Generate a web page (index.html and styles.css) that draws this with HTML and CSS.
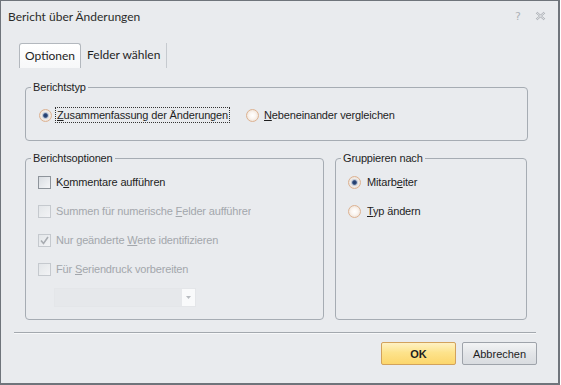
FILE: index.html
```html
<!DOCTYPE html>
<html lang="de">
<head>
  <meta charset="UTF-8" />
  <title>Bericht über Änderungen</title>
  <link rel="stylesheet" href="styles.css">
</head>
<body>

<div class="window">
  <!-- Titelleiste -->
  <div class="titlebar">
    <span class="title">Bericht über Änderungen</span>
    <span class="caption-btn help">?</span>
    <span class="caption-btn close">
      <svg width="11" height="10" viewBox="0 0 11 10">
        <path d="M1.5 1.5 L9.5 8.5 M9.5 1.5 L1.5 8.5" stroke="#a9adb3" stroke-width="2.2" fill="none"/>
        <path d="M1.5 1.5 L9.5 8.5 M9.5 1.5 L1.5 8.5" stroke="#f4f5f7" stroke-width="0.8" fill="none"/>
      </svg>
    </span>
  </div>

  <!-- Reiter -->
  <div class="tabs">
    <div class="tab active">Optionen</div>
    <div class="tab">Felder wählen</div>
  </div>

  <div class="panel">
    <fieldset class="group type">
      <legend>Berichtstyp</legend>
      <div class="inner row">
        <label class="opt focus"><span class="radio on"></span><span class="txt"><u>Z</u>usammenfassung der Änderungen</span></label>
        <label class="opt"><span class="radio"></span><span class="txt"><u>N</u>ebeneinander vergleichen</span></label>
      </div>
    </fieldset>

    <div class="cols">
      <fieldset class="group options">
        <legend>Berichtsoptionen</legend>
        <div class="inner">
          <label class="opt check"><span class="box"></span><span class="txt">K<u>o</u>mmentare aufführen</span></label>
          <label class="opt check disabled"><span class="box"></span><span class="txt">Summen für numerische <u>F</u>elder aufführen</span></label>
          <label class="opt check disabled"><span class="box checked">
            <svg width="9" height="9" viewBox="0 0 9 9"><path d="M1 4.5 L3.5 7.5 L8 1" stroke="#a8acb1" stroke-width="1.6" fill="none"/></svg>
          </span><span class="txt">Nur geänderte <u>W</u>erte identifizieren</span></label>
          <label class="opt check disabled"><span class="box"></span><span class="txt">Für <u>S</u>eriendruck vorbereiten</span></label>
          <div class="combo">
            <span class="combo-field"></span>
            <span class="combo-arrow">
              <svg width="5" height="3" viewBox="0 0 5 3"><path d="M0 0 H5 L2.5 3 Z" fill="#b7bbc0"/></svg>
            </span>
          </div>
        </div>
      </fieldset>

      <fieldset class="group grouping">
        <legend>Gruppieren nach</legend>
        <div class="inner">
          <label class="opt"><span class="radio on"></span><span class="txt">Mitarb<u>e</u>iter</span></label>
          <label class="opt"><span class="radio"></span><span class="txt"><u>T</u>yp ändern</span></label>
        </div>
      </fieldset>
    </div>
  </div>

  <div class="separator"></div>

  <div class="buttons">
    <button class="btn default">OK</button>
    <button class="btn">Abbrechen</button>
  </div>
</div>

</body>
</html>
```

FILE: styles.css
```css
html, body {
  margin: 0;
  padding: 0;
  background: #ffffff;
  font-family: Lato, "Noto Sans", sans-serif;
  font-size: 12px;
  color: #1e1e1e;
}
*, *::before, *::after {
  box-sizing: border-box;
}
.window {
  width: 560px;
  height: 385px;
  border: 1px solid #6f747b;
  border-right-width: 2px;
  border-bottom-width: 2px;
  background: #e9ebee;
  display: flex;
  flex-direction: column;
}
.titlebar {
  height: 30px;
  display: flex;
  align-items: center;
  padding: 0 12px 0 7px;
}
.title {
  flex: 1;
  color: #2b2b2b;
}
.caption-btn {
  display: flex;
  align-items: center;
  justify-content: center;
  width: 12px;
  height: 14px;
  margin-left: 10px;
  color: #aeb2b8;
  font-family: "DejaVu Sans", sans-serif;
  font-size: 11px;
}
.tabs {
  display: flex;
  margin-top: 12px;
  padding-left: 18px;
  height: 25px;
}
.tab {
  height: 25px;
  line-height: 24px;
  padding: 0 6px;
  border-right: 1px solid #c6cacf;
}
.tab.active {
  background: linear-gradient(#ffffff, #f7f8f9);
  border: 1px solid #b3b8be;
  border-bottom: none;
  border-radius: 3px 3px 0 0;
  padding: 0 5px;
}
.panel {
  padding: 12px 0 0 24px;
  font-family: "Liberation Sans", Arial, sans-serif;
  font-size: 11px;
  letter-spacing: -0.15px;
}
.group {
  margin: 0;
  border: 1px solid #a6acb3;
  border-radius: 4px;
  padding: 0;
}
.group legend {
  margin-left: 5px;
  padding: 0 2px;
  line-height: 14px;
}
.type {
  width: 503px;
}
.type .inner {
  padding: 13px 0 17px 13px;
}
.row {
  display: flex;
  gap: 17px;
}
.opt {
  display: flex;
  align-items: center;
  height: 16px;
}
.opt .txt {
  padding: 0 1px;
  line-height: 14px;
  white-space: nowrap;
}
.opt.focus .txt {
  outline: 1px dotted #333333;
  outline-offset: 0;
}
.radio {
  width: 13px;
  height: 13px;
  border-radius: 50%;
  border: 1px solid #ddb291;
  background: radial-gradient(circle, #ffffff 0, #fbf6f2 3px, #efe4da 6px);
  margin-right: 4px;
  flex-shrink: 0;
}
.radio.on {
  background: radial-gradient(circle, #203a68 0, #2e4a7c 1.8px, #b9c3d2 2.8px, #f1ebe6 4px, #ece2d9 6px);
}
.cols {
  display: flex;
  gap: 11px;
  margin-top: 10px;
}
.options {
  width: 299px;
  height: 169px;
  overflow: hidden;
}
.options .inner {
  padding: 9px 0 0 12px;
}
.options .opt {
  margin-bottom: 13px;
  width: 213px;
  overflow: hidden;
}
.check .box {
  width: 13px;
  height: 13px;
  border: 1px solid #8e949b;
  background: linear-gradient(135deg, #d9dde2, #f5f6f8);
  margin-right: 4px;
  flex-shrink: 0;
  display: flex;
  align-items: center;
  justify-content: center;
}
.check.disabled {
  color: #a3a7ac;
}
.check.disabled .box {
  border-color: #c5c9ce;
  background: linear-gradient(135deg, #e3e6e9, #f2f3f5);
}
.combo {
  display: flex;
  width: 142px;
  height: 19px;
  margin: -2px 0 0 16px;
  border: 1px solid #e4e6e9;
  background: #e6e8eb;
}
.combo-field {
  flex: 1;
}
.combo-arrow {
  width: 13px;
  background: #f9fafb;
  display: flex;
  align-items: center;
  justify-content: center;
}
.grouping {
  width: 192px;
  height: 169px;
}
.grouping .inner {
  padding: 9px 0 0 12px;
}
.grouping .opt {
  margin-bottom: 13px;
}
.grouping .radio {
  margin-right: 5px;
}
.separator {
  margin: 12px 22px 0 13px;
  height: 2px;
  border-top: 1px solid #a3a8ae;
  border-bottom: 1px solid #f7f8f9;
}
.buttons {
  display: flex;
  justify-content: flex-end;
  gap: 6px;
  padding: 8px 21px 0 0;
}
.btn {
  width: 75px;
  height: 23px;
  font-family: "Liberation Sans", Arial, sans-serif;
  font-size: 11px;
  color: #1e1e1e;
  border: 1px solid #9ea3aa;
  border-radius: 2px;
  background: linear-gradient(#f3f4f5, #e3e5e8 50%, #d9dce0);
  padding: 0;
}
.btn.default {
  font-weight: bold;
  border-color: #d2a25c;
  background: linear-gradient(#fff2c3, #fde38c 45%, #fcd66c);
}
```
